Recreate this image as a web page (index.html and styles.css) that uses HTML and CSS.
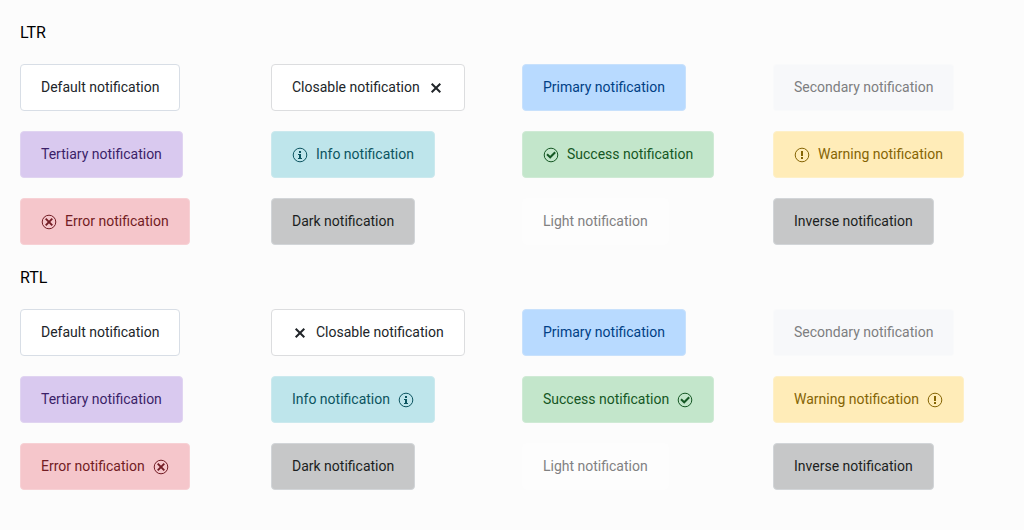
FILE: index.html
```html
<!DOCTYPE html>
<html lang="en">
<head>
<meta charset="utf-8">
<title>Notifications</title>
<link rel="stylesheet" href="styles.css">
</head>
<body>
<svg class="sprite" aria-hidden="true">
  <symbol id="i-info" viewBox="0 0 16 16"><circle cx="8" cy="8" r="6.8" fill="none" stroke="currentColor"/><path fill="currentColor" d="M7 4h2v2H7zM6 7h3v4h1v1H6v-1h1V8H6z"/></symbol>
  <symbol id="i-success" viewBox="0 0 16 16"><circle cx="8" cy="8" r="6.8" fill="none" stroke="currentColor"/><path fill="none" stroke="currentColor" stroke-width="2" d="M4 7.300 7.200 10.300 12.200 5.300"/></symbol>
  <symbol id="i-warning" viewBox="0 0 16 16"><circle cx="8" cy="8" r="6.8" fill="none" stroke="currentColor"/><path fill="currentColor" d="M7 4h2v5H7zM7 10h2v2H7z"/></symbol>
  <symbol id="i-error" viewBox="0 0 16 16"><circle cx="8" cy="8" r="6.8" fill="none" stroke="currentColor"/><path fill="none" stroke="currentColor" stroke-width="1.9" d="m4.700 4.700 6.600 6.600M11.300 4.700l-6.600 6.600"/></symbol>
  <symbol id="i-close" viewBox="0 0 16 16"><path fill="none" stroke="currentColor" stroke-width="2" d="m3.700 3.700 8.600 8.600M12.300 3.700l-8.600 8.600"/></symbol>
</svg>
<main class="page">
  <section class="group">
    <h2 class="title">LTR</h2>
    <div class="grid">
      <div class="note default"><span>Default notification</span></div>
      <div class="note default neutral"><span>Closable notification</span><button class="close" type="button" aria-label="Close"><svg class="icon"><use href="#i-close"/></svg></button></div>
      <div class="note primary"><span>Primary notification</span></div>
      <div class="note secondary"><span>Secondary notification</span></div>
      <div class="note tertiary"><span>Tertiary notification</span></div>
      <div class="note info"><svg class="icon"><use href="#i-info"/></svg><span>Info notification</span></div>
      <div class="note success"><svg class="icon"><use href="#i-success"/></svg><span>Success notification</span></div>
      <div class="note warning"><svg class="icon"><use href="#i-warning"/></svg><span>Warning notification</span></div>
      <div class="note error"><svg class="icon"><use href="#i-error"/></svg><span>Error notification</span></div>
      <div class="note dark"><span>Dark notification</span></div>
      <div class="note light"><span>Light notification</span></div>
      <div class="note dark"><span>Inverse notification</span></div>
    </div>
  </section>
  <section class="group">
    <h2 class="title">RTL</h2>
    <div class="grid">
      <div class="note default" dir="rtl"><span>Default notification</span></div>
      <div class="note default neutral" dir="rtl"><span>Closable notification</span><button class="close" type="button" aria-label="Close"><svg class="icon"><use href="#i-close"/></svg></button></div>
      <div class="note primary" dir="rtl"><span>Primary notification</span></div>
      <div class="note secondary" dir="rtl"><span>Secondary notification</span></div>
      <div class="note tertiary" dir="rtl"><span>Tertiary notification</span></div>
      <div class="note info" dir="rtl"><svg class="icon"><use href="#i-info"/></svg><span>Info notification</span></div>
      <div class="note success" dir="rtl"><svg class="icon"><use href="#i-success"/></svg><span>Success notification</span></div>
      <div class="note warning" dir="rtl"><svg class="icon"><use href="#i-warning"/></svg><span>Warning notification</span></div>
      <div class="note error" dir="rtl"><svg class="icon"><use href="#i-error"/></svg><span>Error notification</span></div>
      <div class="note dark" dir="rtl"><span>Dark notification</span></div>
      <div class="note light" dir="rtl"><span>Light notification</span></div>
      <div class="note dark" dir="rtl"><span>Inverse notification</span></div>
    </div>
  </section>
</main>
</body>
</html>
```
FILE: styles.css
```css
body {
  margin: 0;
  background: #fcfcfc;
  color: #000;
  font-family: Roboto, sans-serif;
}
.sprite {
  display: none;
}
.page {
  display: flex;
  flex-direction: column;
  gap: 20px;
  padding: 20px 0 20px 20px;
}
.group {
  display: flex;
  flex-direction: column;
  gap: 18px;
}
.title {
  margin: 0;
  font-size: 16px;
  font-weight: 400;
  line-height: 26px;
}
.grid {
  display: grid;
  grid-template-columns: repeat(4, 1fr);
  row-gap: 20px;
  justify-items: start;
}
.note {
  display: flex;
  align-items: center;
  gap: 8px;
  padding: 12px 20px;
  border: 1px solid;
  border-radius: 4px;
  font-size: 14px;
  line-height: 21px;
  white-space: nowrap;
}
.icon {
  display: block;
  flex: none;
  width: 16px;
  height: 16px;
  margin-top: 1px;
}
.close {
  padding: 0;
  border: 0;
  background: none;
  color: inherit;
  cursor: pointer;
}
.default { background: #fff; border-color: #d8dee6; color: #212529; }
.neutral { border-color: #dcdddf; }
.primary { background: #b8daff; border-color: #c8e1fc; color: #004085; }
.secondary { background: #f7f8fa; border-color: #f9fafb; color: #7d7e80; }
.tertiary { background: #d9c9ef; border-color: #e0d4f1; color: #3b1f68; }
.info { background: #bee5eb; border-color: #cbe9ee; color: #0c5460; }
.success { background: #c3e6cb; border-color: #cfead5; color: #155724; }
.warning { background: #ffecb8; border-color: #fef0c8; color: #856404; }
.error { background: #f5c6cb; border-color: #f7d1d5; color: #721c24; }
.dark { background: #c6c7c8; border-color: #d2d5d8; color: #1b1e21; }
.light { background: #fdfdfd; border-color: #fdfdfd; color: #818182; }
```
